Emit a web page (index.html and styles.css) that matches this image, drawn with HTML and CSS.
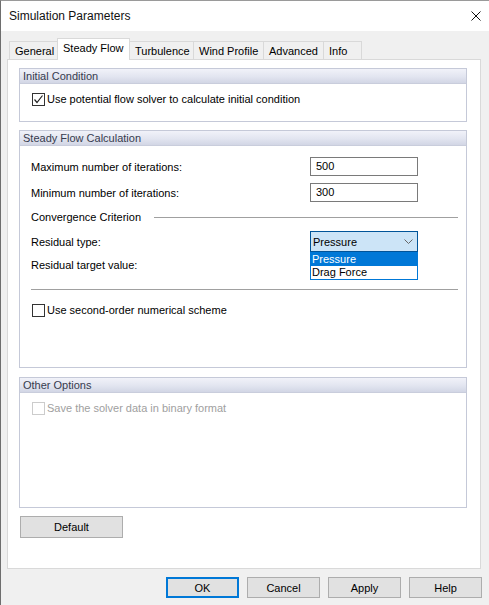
FILE: index.html
```html
<!DOCTYPE html>
<html>
<head>
<meta charset="utf-8">
<title>Simulation Parameters</title>
<link rel="stylesheet" href="styles.css">
</head>
<body>
<div class="window">
  <div class="titlebar">
    <span class="title">Simulation Parameters</span>
    <svg class="close" width="10" height="10" viewBox="0 0 10 10"><path d="M0.5 0.5 L9.5 9.5 M9.5 0.5 L0.5 9.5" stroke="#111" stroke-width="1"/></svg>
  </div>
  <div class="content">
    <div class="tabs">
      <div class="tab tab-general">General</div>
      <div class="tab tab-steady active">Steady Flow</div>
      <div class="tab tab-turb">Turbulence</div>
      <div class="tab tab-wind">Wind Profile</div>
      <div class="tab tab-adv">Advanced</div>
      <div class="tab tab-info">Info</div>
    </div>
    <div class="panel">
      <div class="group group-initial">
        <div class="group-header">Initial Condition</div>
        <div class="group-body body-initial">
          <label class="check-row">
            <span class="checkbox checked"><svg width="11" height="11" viewBox="0 0 11 11"><path d="M1.5 5.5 L4 8.5 L9.5 1.5" fill="none" stroke="#222" stroke-width="1.2"/></svg></span>
            <span>Use potential flow solver to calculate initial condition</span>
          </label>
        </div>
      </div>

      <div class="group group-steady">
        <div class="group-header">Steady Flow Calculation</div>
        <div class="group-body body-steady">
          <div class="field-row">
            <span class="field-label">Maximum number of iterations:</span>
            <div class="input">500</div>
          </div>
          <div class="field-row row-gap">
            <span class="field-label">Minimum number of iterations:</span>
            <div class="input">300</div>
          </div>
          <div class="section-row">
            <span class="section-label">Convergence Criterion</span>
            <span class="section-line"></span>
          </div>
          <div class="field-row row-type">
            <span class="field-label">Residual type:</span>
            <div class="combo-wrap">
              <div class="combo">
                <span>Pressure</span>
                <svg class="chev" width="9" height="5" viewBox="0 0 9 5"><path d="M0.5 0.5 L4.5 4.5 L8.5 0.5" fill="none" stroke="#666" stroke-width="1"/></svg>
              </div>
              <div class="combo-list">
                <div class="combo-item selected">Pressure</div>
                <div class="combo-item">Drag Force</div>
              </div>
            </div>
          </div>
          <div class="field-row row-target">
            <span class="field-label">Residual target value:</span>
          </div>
          <div class="separator"></div>
          <label class="check-row row-second">
            <span class="checkbox"></span>
            <span>Use second-order numerical scheme</span>
          </label>
        </div>
      </div>

      <div class="group group-other">
        <div class="group-header">Other Options</div>
        <div class="group-body body-other">
          <label class="check-row disabled">
            <span class="checkbox"></span>
            <span>Save the solver data in binary format</span>
          </label>
        </div>
      </div>

      <button class="btn btn-default">Default</button>
    </div>
    <div class="footer">
      <button class="btn btn-foot btn-ok">OK</button>
      <button class="btn btn-foot">Cancel</button>
      <button class="btn btn-foot">Apply</button>
      <button class="btn btn-foot">Help</button>
    </div>
  </div>
</div>
</body>
</html>
```

FILE: styles.css
```css
* { box-sizing: border-box; }
html, body { margin: 0; padding: 0; }
body {
  width: 489px;
  height: 605px;
  overflow: hidden;
  font-family: "Liberation Sans", Arial, sans-serif;
  font-size: 11px;
  color: #000;
  background: #f0f0f0;
}
.window {
  width: 489px;
  height: 605px;
  border-left: 1px solid #6e6e6e;
  border-top: 1px solid #9a9a9a;
  background: #f0f0f0;
}
.titlebar {
  height: 30px;
  background: #fff;
  display: flex;
  align-items: center;
  justify-content: space-between;
  padding: 0 8px 0 8px;
}
.title {
  font-size: 12px;
  color: #111;
  padding-bottom: 1px;
}
.close { margin-bottom: 1px; }
.content {
  padding: 0 7px 0 6px;
}
.tabs {
  display: flex;
  margin-top: 7px;
  margin-left: 2px;
  height: 21px;
  align-items: flex-end;
}
.tab {
  height: 18px;
  border: 1px solid #d9d9d9;
  border-bottom: none;
  border-right: none;
  background: #f0f0f0;
  display: flex;
  align-items: center;
  justify-content: flex-start;
  padding-left: 5px;
  white-space: nowrap;
}
.tab-info { border-right: 1px solid #d9d9d9; }
.tab.active {
  height: 22px;
  background: #fff;
  border-right: 1px solid #d9d9d9;
  margin-bottom: -1px;
  position: relative;
  z-index: 2;
  padding-bottom: 3px;
  padding-left: 5px;
}
.tab-steady + .tab { border-left: none; }
.tab-general { width: 48px; }
.tab-steady { width: 73px; }
.tab-turb { width: 63px; }
.tab-wind { width: 70px; }
.tab-adv { width: 60px; }
.tab-info { width: 39px; }

.panel {
  width: 474px;
  height: 510px;
  background: #fff;
  border: 1px solid #d9d9d9;
  padding: 8px 13px 0 11px;
  position: relative;
}
.group {
  border: 1px solid #c5c9d8;
  display: flex;
  flex-direction: column;
}
.group-initial { height: 54px; }
.group-steady { height: 238px; margin-top: 8px; }
.group-other { height: 131px; margin-top: 9px; }
.group-header {
  height: 15px;
  line-height: 15px;
  padding-left: 3px;
  color: #363b4e;
  background: linear-gradient(to bottom, #f1f2f9 0%, #e2e5f0 55%, #d2d6e5 100%);
  border-bottom: 1px solid #c9cddc;
}
.group-body {
  flex: 1;
  padding-left: 11px;
  padding-right: 8px;
}
.body-initial { padding-top: 7px; }
.body-steady { padding-top: 11px; }
.body-other { padding-top: 7px; }

.check-row {
  display: flex;
  align-items: center;
  height: 16px;
  gap: 2px;
}
.checkbox {
  width: 13px;
  height: 13px;
  border: 1px solid #333;
  background: #fff;
  margin-left: 1px;
  display: flex;
  align-items: center;
  justify-content: center;
}
.disabled { color: #a0a0a0; }
.disabled .checkbox { border-color: #cccccc; }

.field-row {
  display: flex;
  align-items: center;
  height: 19px;
}
.row-gap { margin-top: 7px; }
.field-label { width: 279px; flex: none; }
.input {
  width: 108px;
  height: 19px;
  border: 1px solid #7a7a7a;
  background: #fff;
  padding-left: 5px;
  line-height: 17px;
}
.section-row {
  display: flex;
  align-items: center;
  height: 14px;
  margin-top: 8px;
}
.section-label { width: 123px; flex: none; }
.section-line {
  flex: 1;
  height: 1px;
  background: #a0a0a0;
}
.row-type { height: 21px; margin-top: 7px; }
.combo-wrap {
  position: relative;
  width: 108px;
}
.combo {
  height: 21px;
  border: 1px solid #005499;
  background: #cce4f7;
  display: flex;
  align-items: center;
  justify-content: space-between;
  padding: 0 4px 0 2px;
}
.chev { margin-bottom: 1px; }
.combo-list {
  position: absolute;
  top: 21px;
  left: 0;
  width: 108px;
  border: 1px solid #0078d7;
  background: #fff;
  z-index: 5;
}
.combo-item {
  height: 13px;
  line-height: 13px;
  padding-left: 1px;
}
.combo-item.selected {
  background: #0078d7;
  color: #fff;
}
.row-target { margin-top: 3px; }
.separator {
  height: 1px;
  background: #a0a0a0;
  margin-top: 15px;
}
.row-second { margin-top: 12px; }

.btn {
  font-family: "Liberation Sans", Arial, sans-serif;
  font-size: 11px;
  color: #000;
  background: #e1e1e1;
  border: 1px solid #adadad;
  padding: 0;
  margin: 0;
  display: flex;
  align-items: center;
  justify-content: center;
}
.btn-default {
  width: 103px;
  height: 22px;
  margin-top: 8px;
  margin-left: 1px;
}
.footer {
  display: flex;
  justify-content: flex-end;
  gap: 8px;
  margin-top: 8px;
}
.btn-foot {
  width: 73px;
  height: 21px;
}
.btn-ok {
  border: 2px solid #0078d7;
}
```
